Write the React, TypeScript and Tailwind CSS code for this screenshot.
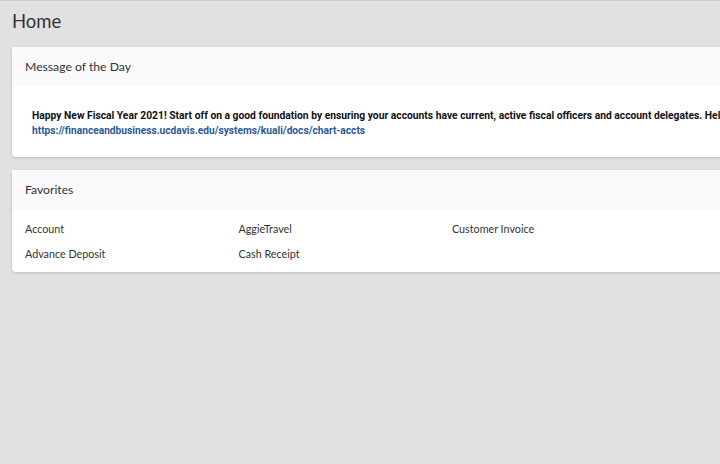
import React from "react";

const favorites = ["Account", "AggieTravel", "Customer Invoice", "", "Advance Deposit", "Cash Receipt"];

export default function App() {
  return (
    <div className="h-[464px] w-[720px] overflow-hidden bg-[#e1e1e3] border-t border-[#c9c9cb] font-['Lato',sans-serif] text-[#333]">
      <h1 className="px-3 pt-[7px] text-[18.5px] leading-[26px] text-[#333]">Home</h1>

      <div className="ml-3 mt-[13px] w-[880px] rounded bg-white shadow-[0_1px_3px_rgba(0,0,0,0.18)]">
        <div className="h-10 px-[13px] flex items-center bg-[#fafafc] text-[12.2px]">Message of the Day</div>
        <div className="px-5 pt-[21px] pb-[19px] font-['Roboto',sans-serif] font-bold text-[10.3px] leading-[15px] text-[#111]">
          <p className="whitespace-nowrap">
            Happy New Fiscal Year 2021! Start off on a good foundation by ensuring your accounts have current, active fiscal officers and account delegates. Help us keep our data clean.
          </p>
          <a href="#" className="text-[10.2px] text-[#2a5a99]">https://financeandbusiness.ucdavis.edu/systems/kuali/docs/chart-accts</a>
        </div>
      </div>

      <div className="ml-3 mt-[13px] w-[880px] rounded bg-white shadow-[0_1px_3px_rgba(0,0,0,0.18)]">
        <div className="h-10 px-[13px] pt-px flex items-center bg-[#fafafc] text-[12.2px]">Favorites</div>
        <div className="grid grid-cols-4 px-[13px] pt-[6px] pb-[6px] text-[10.75px]">
          {favorites.map((f, i) => (
            <div key={i} className="h-[25px] leading-[25px]">{f}</div>
          ))}
        </div>
      </div>
    </div>
  );
}
